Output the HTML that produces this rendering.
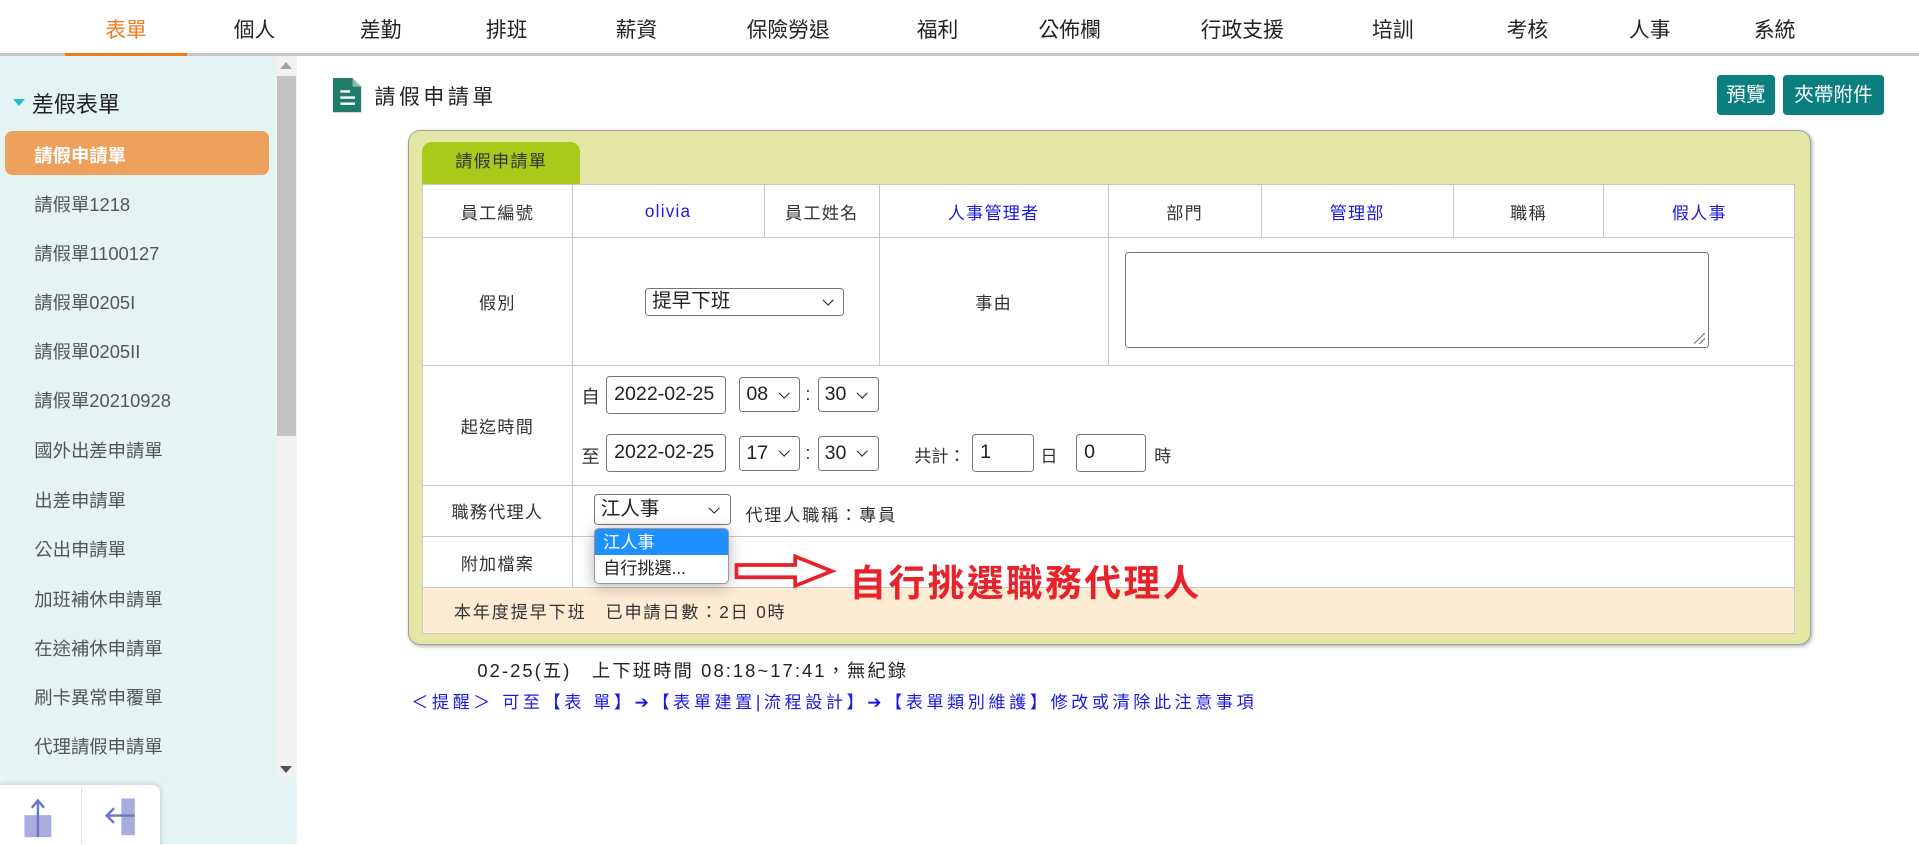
<!DOCTYPE html>
<html><head><meta charset="utf-8">
<style>
*{box-sizing:border-box;margin:0;padding:0}
html,body{width:1919px;height:845px;overflow:hidden;background:#fff}
#w{zoom:1.2239;width:1568px;height:690px;position:relative;font-family:"Liberation Sans","Noto Sans CJK TC",sans-serif;color:#333}
.a{position:absolute;white-space:nowrap}
.nav{font-size:17px;color:#222;top:11px;transform:translateX(-50%)}
.side{position:absolute;left:0;top:46px;width:243px;height:644px;background:#e4f4f5}
.si{position:absolute;left:28px;font-size:15px;color:#555}
td{border:1px solid #c8c8c8;text-align:center;font-size:14px;color:#333;letter-spacing:1px}
.bl{color:#1a1adf}
.inp{position:absolute;border:1px solid #767676;border-radius:3px;background:#fff;font-size:16px;color:#222;padding-left:6px;line-height:28px}
.sel{position:absolute;border:1px solid #767676;border-radius:3px;background:#fff;font-size:16px;color:#222;padding-left:5px}
.sel:after{content:"";position:absolute;right:9px;top:50%;width:6px;height:6px;border-right:1.6px solid #222;border-bottom:1.6px solid #222;transform:translateY(-70%) rotate(45deg)}
</style></head><body><div id="w">
<div class="a" style="left:0;top:43px;width:1568px;height:3px;background:#c8c8c8"></div>
<div class="a" style="left:53px;top:43px;width:100px;height:3px;background:#f07b1d"></div>
<div class="a nav" style="left:103px;color:#f07b1d">表單</div>
<div class="a nav" style="left:208px">個人</div>
<div class="a nav" style="left:311px">差勤</div>
<div class="a nav" style="left:414px">排班</div>
<div class="a nav" style="left:520px">薪資</div>
<div class="a nav" style="left:644px">保險勞退</div>
<div class="a nav" style="left:766px">福利</div>
<div class="a nav" style="left:874px">公佈欄</div>
<div class="a nav" style="left:1015px">行政支援</div>
<div class="a nav" style="left:1138px">培訓</div>
<div class="a nav" style="left:1248px">考核</div>
<div class="a nav" style="left:1348px">人事</div>
<div class="a nav" style="left:1450px">系統</div>

<div class="side">
<div class="a" style="left:225px;top:0;width:18px;height:590px;background:#f1f1f1"></div>
<div class="a" style="left:226px;top:16px;width:16px;height:294px;background:#c1c1c1"></div>
<div class="a" style="left:229px;top:5px;border:5px solid transparent;border-bottom:6px solid #a3a3a3;border-top:0"></div>
<div class="a" style="left:229px;top:580px;border:5px solid transparent;border-top:6px solid #505050;border-bottom:0"></div>
<div class="a" style="left:11px;top:35px;border:5px solid transparent;border-top:6px solid #2bb5c5;border-bottom:0"></div>
<div class="a" style="left:26px;top:25px;font-size:18px;color:#222">差假表單</div>
<div class="a" style="left:4px;top:61px;width:216px;height:36px;background:#eda05b;border-radius:6px"></div>
<div class="si" style="top:70px;color:#fff;font-weight:bold">請假申請單</div>
<div class="si" style="top:110px">請假單1218</div>
<div class="si" style="top:150px">請假單1100127</div>
<div class="si" style="top:190px">請假單0205I</div>
<div class="si" style="top:230px">請假單0205II</div>
<div class="si" style="top:270px">請假單20210928</div>
<div class="si" style="top:311px">國外出差申請單</div>
<div class="si" style="top:352px">出差申請單</div>
<div class="si" style="top:392px">公出申請單</div>
<div class="si" style="top:433px">加班補休申請單</div>
<div class="si" style="top:473px">在途補休申請單</div>
<div class="si" style="top:513px">刷卡異常申覆單</div>
<div class="si" style="top:553px">代理請假申請單</div>
<div class="a" style="left:0;top:595px;width:131px;height:52px;background:#fff;border-radius:0 6px 0 0;box-shadow:0 0 5px rgba(0,0,0,.2)"></div>
<div class="a" style="left:66px;top:598px;width:1px;height:46px;background:#e0e0e0"></div>
<svg class="a" style="left:18px;top:606px" width="30" height="36"><rect x="2" y="14" width="22" height="18" fill="#a8addd"/><path d="M13 32V2M8 8l5-6 5 6" stroke="#6e76c8" stroke-width="2" fill="none"/></svg>
<svg class="a" style="left:84px;top:604px" width="30" height="36"><rect x="15" y="2" width="11" height="30" fill="#a8addd"/><path d="M26 16H3M9 10l-6 6 6 6" stroke="#6e76c8" stroke-width="2" fill="none"/></svg>
</div>

<svg class="a" style="left:272px;top:64px" width="24" height="28"><path d="M0 0h16l7 7v21H0z" fill="#1f7b6a"/><path d="M16 0v7h7" fill="#fff" opacity=".5"/><path d="M6 11h8M6 16h12M6 21h12" stroke="#fff" stroke-width="2"/></svg>
<div class="a" style="left:306px;top:65px;font-size:17px;color:#222;letter-spacing:3px">請假申請單</div>
<div class="a" style="left:1403px;top:61px;width:47px;height:33px;background:#0b7f80;border-radius:3px;color:#fff;font-size:16px;text-align:center;line-height:33px">預覽</div>
<div class="a" style="left:1457px;top:61px;width:82px;height:33px;background:#0b7f80;border-radius:3px;color:#fff;font-size:16px;text-align:center;line-height:33px">夾帶附件</div>

<div class="a" style="left:333px;top:106px;width:1147px;height:421px;background:#e3e6a5;border:1px solid #a0a0a0;border-radius:10px;box-shadow:1px 1px 3px rgba(0,0,0,.3)"></div>
<div class="a" style="left:345px;top:116px;width:129px;height:34px;background:#a8c81a;border-radius:8px 8px 0 0;font-size:14px;color:#333;text-align:center;line-height:32px;letter-spacing:1px">請假申請單</div>
<table class="a" style="left:345px;top:150px;width:1122px;border-collapse:collapse;background:#fff">
<tr style="height:44px"><td style="width:122px">員工編號</td><td class="bl" style="width:157px">olivia</td><td style="width:94px">員工姓名</td><td class="bl" style="width:187px">人事管理者</td><td style="width:125px">部門</td><td class="bl" style="width:157px">管理部</td><td style="width:123px">職稱</td><td class="bl">假人事</td></tr>
<tr style="height:104px"><td>假別</td><td colspan="2"></td><td>事由</td><td colspan="4"></td></tr>
<tr style="height:98px"><td>起迄時間</td><td colspan="7"></td></tr>
<tr style="height:42px"><td>職務代理人</td><td colspan="7"></td></tr>
<tr style="height:42px"><td>附加檔案</td><td colspan="7"></td></tr>
<tr style="height:37px;background:#feebd3"><td colspan="8" style="text-align:left;padding-left:25px;letter-spacing:1.5px">本年度提早下班　已申請日數：2日 0時</td></tr>
</table>
<div class="sel" style="left:527px;top:235px;width:163px;height:23px;line-height:21px">提早下班</div>
<div class="a" style="left:919px;top:206px;width:477px;height:78px;border:1px solid #767676;border-radius:3px"></div>
<div class="a" style="left:1384px;top:272px;width:9px;height:9px;background:linear-gradient(135deg,transparent 45%,#777 46%,#777 52%,transparent 53%,transparent 70%,#777 71%,#777 77%,transparent 78%)"></div>
<div class="a" style="left:475px;top:313px;font-size:15px">自</div>
<div class="inp" style="left:495px;top:307px;width:98px;height:31px">2022-02-25</div>
<div class="sel" style="left:604px;top:308px;width:50px;height:29px;line-height:27px">08</div>
<div class="a" style="left:658px;top:313px;font-size:15px">:</div>
<div class="sel" style="left:668px;top:308px;width:50px;height:29px;line-height:27px">30</div>
<div class="a" style="left:475px;top:362px;font-size:15px">至</div>
<div class="inp" style="left:495px;top:355px;width:98px;height:31px">2022-02-25</div>
<div class="sel" style="left:604px;top:356px;width:50px;height:29px;line-height:27px">17</div>
<div class="a" style="left:658px;top:361px;font-size:15px">:</div>
<div class="sel" style="left:668px;top:356px;width:50px;height:29px;line-height:27px">30</div>
<div class="a" style="left:747px;top:361px;font-size:14px">共計：</div>
<div class="inp" style="left:794px;top:355px;width:51px;height:31px">1</div>
<div class="a" style="left:850px;top:361px;font-size:14px">日</div>
<div class="inp" style="left:879px;top:355px;width:57px;height:31px">0</div>
<div class="a" style="left:943px;top:361px;font-size:14px">時</div>
<div class="sel" style="left:485px;top:404px;width:112px;height:25px;line-height:23px">江人事</div>
<div class="a" style="left:609px;top:409px;font-size:14px;letter-spacing:1.5px">代理人職稱：專員</div>
<div class="a" style="left:485px;top:431px;width:111px;height:46px;background:#fff;border:1px solid #999;border-radius:4px;box-shadow:0 2px 12px rgba(0,0,0,.3);overflow:hidden;font-size:14px">
<div style="background:#1e90ff;color:#fff;height:22px;line-height:22px;padding-left:7px">江人事</div>
<div style="height:22px;line-height:22px;padding-left:7px;color:#222">自行挑選...</div></div>
<svg class="a" style="left:600px;top:453px" width="84" height="28"><path d="M2 9h48V2l30 12-30 12v-7H2z" fill="none" stroke="#e8222a" stroke-width="3"/></svg>
<div class="a" style="left:694px;top:452px;font-size:30px;font-weight:bold;color:#e8222a;letter-spacing:2px">自行挑選職務代理人</div>
<div class="a" style="left:390px;top:537px;font-size:15px;color:#222;letter-spacing:1.7px">02-25(五)　上下班時間 08:18~17:41，無紀錄</div>
<div class="a" style="left:336px;top:562px;font-size:14px;color:#1a1adf;letter-spacing:2.9px">＜提醒＞ 可至【表 單】➔【表單建置|流程設計】➔【表單類別維護】修改或清除此注意事項</div>
</div></body></html>
